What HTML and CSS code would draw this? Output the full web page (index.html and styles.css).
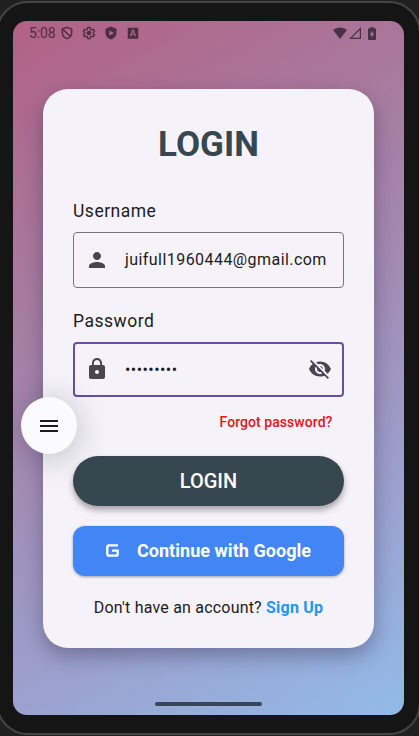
FILE: index.html
```html
<!DOCTYPE html>
<html lang="en">
<head>
<meta charset="utf-8">
<meta name="viewport" content="width=device-width, initial-scale=1">
<title>Login</title>
<link rel="stylesheet" href="styles.css">
</head>
<body>
<div class="device">
  <main class="screen">
    <header class="status">
      <div class="status-left">
        <span class="clock">5:08</span>
        <svg class="st shield" viewBox="0 0 24 24"><path fill="none" stroke="currentColor" stroke-width="2.500" d="M12 2.300 20 5.200V11.500c0 5-3.300 8.700-8 10.200-4.700-1.500-8-5.200-8-10.200V5.200ZM5 6l13 12"/></svg>
        <svg class="st" viewBox="0 0 24 24"><path fill="none" stroke="currentColor" stroke-width="2.200" d="M10 2.500h4l.7 3 2 1.100 2.800-.9 2 3.500-2.200 2v1.600l2.200 2-2 3.500-2.800-.9-2 1.100-.7 3h-4l-.7-3-2-1.100-2.800.9-2-3.500 2.200-2v-1.600l-2.200-2 2-3.500 2.800.9 2-1.100Z"/><circle cx="12" cy="12" r="3.800" fill="currentColor"/></svg>
        <svg class="st" viewBox="0 0 24 24"><path fill="currentColor" fill-rule="evenodd" d="M12 1 2.500 4.500V11c0 5.500 4 10.500 9.500 12 5.500-1.500 9.500-6.500 9.500-12V4.500ZM9 7.500l8 4.500-8 4.500Z"/></svg>
        <svg class="st" viewBox="0 0 24 24"><path fill="currentColor" fill-rule="evenodd" d="M3 3h18v19H3ZM10.900 6 6.800 17.500h2.200l.8-2.600h4.400l.8 2.600h2.200L13.100 6ZM12 8.600l1.500 4.500h-3Z"/></svg>
      </div>
      <div class="status-right">
        <svg class="wifi" viewBox="0 0 14 12"><path fill="currentColor" d="M0 3C4-.5 10-.5 14 3L7 12Z"/></svg>
        <svg class="signal" viewBox="0 0 12 12"><path fill="none" stroke="currentColor" stroke-width="1.200" d="M1.500 11.400H11.400V1.500Z"/></svg>
        <svg class="battery" viewBox="0 0 8 13"><path fill="currentColor" fill-rule="evenodd" d="M2.500 0h3v1.200H7.200q.8 0 .8.800v10.200q0 .8-.8.800H.8q-.8 0-.8-.8V2q0-.8.800-.8h1.700ZM4.600 3.500 1.900 7.700h1.600v3l2.700-4.300H4.600Z"/></svg>
      </div>
    </header>

    <form class="card">
      <h1>LOGIN</h1>
      <div class="label">Username</div>
      <div class="field">
        <svg class="icon" viewBox="0 0 24 24"><path fill="currentColor" d="M12 12c2.210 0 4-1.790 4-4s-1.790-4-4-4-4 1.790-4 4 1.790 4 4 4zm0 2c-2.670 0-8 1.340-8 4v2h16v-2c0-2.660-5.330-4-8-4z"/></svg>
        <span class="value">juifull1960444@gmail.com</span>
      </div>
      <div class="label second">Password</div>
      <div class="field focused">
        <svg class="icon" viewBox="0 0 24 24"><path fill="currentColor" d="M18 8h-1V6c0-2.760-2.240-5-5-5S7 3.240 7 6v2H6c-1.100 0-2 .9-2 2v10c0 1.100.9 2 2 2h12c1.100 0 2-.9 2-2V10c0-1.100-.9-2-2-2zm-6 9c-1.100 0-2-.9-2-2s.9-2 2-2 2 .9 2 2-.9 2-2 2zm3.100-9H8.900V6c0-1.710 1.390-3.100 3.100-3.100 1.710 0 3.100 1.390 3.100 3.100v2z"/></svg>
        <span class="value dots">•••••••••</span>
        <svg class="icon eye" viewBox="0 0 24 24"><path fill="currentColor" d="M12 7c2.760 0 5 2.240 5 5 0 .65-.13 1.260-.36 1.830l2.920 2.920c1.510-1.260 2.700-2.890 3.430-4.750-1.730-4.390-6-7.500-11-7.500-1.400 0-2.740.25-3.980.7l2.160 2.160C10.740 7.130 11.350 7 12 7zM2 4.270l2.280 2.280.46.460C3.080 8.300 1.780 10.020 1 12c1.730 4.390 6 7.500 11 7.500 1.550 0 3.030-.3 4.380-.84l.42.420L19.730 22 21 20.730 3.270 3 2 4.270zM7.530 9.800l1.550 1.550c-.05.210-.08.430-.08.650 0 1.660 1.340 3 3 3 .22 0 .44-.03.650-.08l1.550 1.550c-.67.330-1.410.530-2.200.530-2.760 0-5-2.240-5-5 0-.79.2-1.530.53-2.200zm4.310-.78l3.150 3.150.02-.16c0-1.660-1.340-3-3-3l-.17.010z"/></svg>
      </div>
      <div class="forgot">Forgot password?</div>
      <button type="button" class="btn login">LOGIN</button>
      <button type="button" class="btn google">
        <svg class="g" viewBox="0 0 13 13"><path fill="none" stroke="currentColor" stroke-width="2.300" d="M12 1.300H3Q1.300 1.300 1.300 3v7q0 1.700 1.700 1.700h7q1.700 0 1.700-1.700V6.600H6"/></svg>
        <span>Continue with Google</span>
      </button>
      <p class="signup">Don't have an account? <b>Sign Up</b></p>
    </form>
    <div class="home"></div>
    <div class="menu"><svg viewBox="0 0 24 24"><path fill="currentColor" d="M3 18h18v-2H3v2zm0-5h18v-2H3v2zm0-7v2h18V6H3z"/></svg></div>
  </main>
</div>
</body>
</html>
```
FILE: styles.css
```css
* { box-sizing: border-box; }
body {
  margin: 0;
  width: 419px;
  height: 736px;
  overflow: hidden;
  background: #202020;
  font-family: Roboto, sans-serif;
  color: #1d1b20;
}
.device {
  width: 425px;
  height: 734px;
  margin: 1px 0 0 -4px;
  padding: 18px 15px;
  border: 2px solid #444;
  border-radius: 32px;
  background: #151515;
}
.screen {
  position: relative;
  display: flex;
  flex-direction: column;
  width: 391px;
  height: 694px;
  overflow: hidden;
  border-radius: 14px;
  background: linear-gradient(150.6deg, #b26185 0%, #a87b9f 30%, #a38bb4 50%, #9ba2d0 76%, #92bbe8 100%);
}
.status {
  display: flex;
  justify-content: space-between;
  height: 24px;
  padding: 0 28px 0 16px;
  color: #4b2e41;
}
.status-left, .status-right { display: flex; align-items: center; }
.clock { width: 31px; font-size: 14px; letter-spacing: -.1px; }
.st { width: 14px; height: 14px; margin-right: 8px; }
.status-right { gap: 2px; color: #463345; }
.wifi { width: 14px; height: 12px; }
.signal { width: 12px; height: 12px; }
.battery { width: 8px; height: 13px; margin-left: 5px; }
.card {
  display: flex;
  flex-direction: column;
  width: 331px;
  height: 559px;
  margin: 44px 0 0 30px;
  padding: 36px 30px 0;
  border-radius: 25px;
  background: #f5f3f9;
  box-shadow: 0 8px 20px rgba(35, 30, 60, .36);
}
h1 {
  margin: 0;
  line-height: 40px;
  font-size: 35px;
  font-weight: 700;
  text-align: center;
  color: #37474f;
}
.label { margin-top: 35px; line-height: 22px; font-size: 17.500px; letter-spacing: .5px; }
.field {
  display: flex;
  align-items: center;
  height: 56px;
  margin-top: 10px;
  padding: 0 11px 1px;
  border: 1px solid #79747e;
  border-radius: 4px;
}
.field.focused { height: 55px; border: 2px solid #6750a4; padding: 0 10px 1px; }
.label.second { margin-top: 22px; }
.icon { flex: none; width: 24px; height: 24px; color: #49454f; }
.value { margin-left: 16px; font-size: 16px; letter-spacing: .44px; white-space: nowrap; }
.eye { margin-left: auto; }
.forgot {
  margin: 15px 11.500px 0 0;
  line-height: 20px;
  font-size: 14px;
  font-weight: 500;
  letter-spacing: .06px;
  text-align: right;
  color: #e91414;
}
.btn {
  display: flex;
  align-items: center;
  justify-content: center;
  flex: none;
  width: 271px;
  height: 50px;
  padding: 0;
  border: 0;
  font-family: inherit;
  color: #fff;
}
.login {
  margin-top: 24px;
  padding-bottom: 1px;
  border-radius: 25px;
  font-size: 20px;
  font-weight: 500;
  background: #37474f;
  box-shadow: 0 4px 6px rgba(40, 20, 40, .38);
}
.google {
  gap: 18px;
  margin-top: 20px;
  padding-bottom: 2px;
  border-radius: 12px;
  font-size: 18px;
  font-weight: 700;
  background: #4285f4;
  box-shadow: 0 1px 3px rgba(0, 0, 0, .35);
}
.google span { letter-spacing: .05px; }
.g { width: 13px; height: 13px; margin-top: 1px; }
.signup { margin: 20px 0 0; line-height: 24px; font-size: 16px; letter-spacing: .2px; text-align: center; white-space: nowrap; }
.signup b { color: #2196f3; }
.home { width: 107px; height: 4px; margin: 54px auto 0 142px; border-radius: 2px; background: #364657; }
.menu {
  position: absolute;
  left: 8px;
  top: 376px;
  display: flex;
  align-items: center;
  justify-content: center;
  width: 56px;
  height: 57px;
  border-radius: 50%;
  background: #fafaff;
  box-shadow: 0 4px 32px rgba(20, 20, 40, .25);
}
.menu svg { width: 24px; height: 24px; }
```
